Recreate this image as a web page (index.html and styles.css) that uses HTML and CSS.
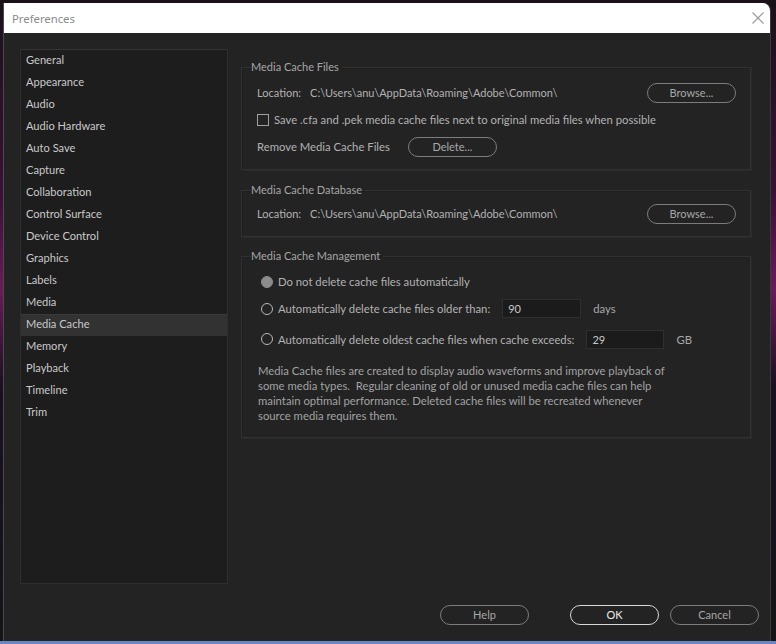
FILE: index.html
```html
<!DOCTYPE html>
<html>
<head>
<meta charset="utf-8">
<title>Preferences</title>
<link rel="stylesheet" href="styles.css">
</head>
<body>
<div class="screen">
  <div class="window">
    <div class="titlebar">
      <span class="title">Preferences</span>
      <svg class="close" width="14" height="14" viewBox="0 0 14 14"><path d="M1.5 1.5 L12.5 12.5 M12.5 1.5 L1.5 12.5" stroke="#9a9a9a" stroke-width="1.1" fill="none"/></svg>
    </div>
    <div class="body">
      <div class="main">
        <ul class="sidebar">
          <li>General</li>
          <li>Appearance</li>
          <li>Audio</li>
          <li>Audio Hardware</li>
          <li>Auto Save</li>
          <li>Capture</li>
          <li>Collaboration</li>
          <li>Control Surface</li>
          <li>Device Control</li>
          <li>Graphics</li>
          <li>Labels</li>
          <li>Media</li>
          <li class="selected">Media Cache</li>
          <li>Memory</li>
          <li>Playback</li>
          <li>Timeline</li>
          <li>Trim</li>
        </ul>
        <div class="content">
          <fieldset class="group g1">
            <legend>Media Cache Files</legend>
            <div class="row loc">
              <span class="label">Location:</span>
              <span class="path">C:\Users\anu\AppData\Roaming\Adobe\Common\</span>
              <span class="spacer"></span>
              <button class="btn">Browse...</button>
            </div>
            <div class="row">
              <span class="checkbox"></span>
              <span class="label">Save .cfa and .pek media cache files next to original media files when possible</span>
            </div>
            <div class="row">
              <span class="label">Remove Media Cache Files</span>
              <button class="btn delete">Delete...</button>
            </div>
          </fieldset>
          <fieldset class="group g2">
            <legend>Media Cache Database</legend>
            <div class="row loc">
              <span class="label">Location:</span>
              <span class="path">C:\Users\anu\AppData\Roaming\Adobe\Common\</span>
              <span class="spacer"></span>
              <button class="btn">Browse...</button>
            </div>
          </fieldset>
          <fieldset class="group g3">
            <legend>Media Cache Management</legend>
            <div class="row r1">
              <span class="radio checked"></span>
              <span class="label">Do not delete cache files automatically</span>
            </div>
            <div class="row r2">
              <span class="radio"></span>
              <span class="label">Automatically delete cache files older than:</span>
              <span class="input i1">90</span>
              <span class="unit">days</span>
            </div>
            <div class="row r3">
              <span class="radio"></span>
              <span class="label">Automatically delete oldest cache files when cache exceeds:</span>
              <span class="input i2">29</span>
              <span class="unit">GB</span>
            </div>
            <p class="note">Media Cache files are created to display audio waveforms and improve playback of some media types.&nbsp; Regular cleaning of old or unused media cache files can help maintain optimal performance. Deleted cache files will be recreated whenever source media requires them.</p>
          </fieldset>
        </div>
      </div>
      <div class="footer">
        <button class="btn fbtn">Help</button>
        <button class="btn fbtn ok">OK</button>
        <button class="btn fbtn">Cancel</button>
      </div>
    </div>
  </div>
  <div class="taskbar"></div>
</div>
</body>
</html>
```
FILE: styles.css
```css
* { box-sizing: border-box; }
html, body { margin: 0; padding: 0; }
body {
  width: 776px;
  height: 644px;
  overflow: hidden;
  background: linear-gradient(180deg, #1a1218 0%, #3a1036 30%, #6a1a5a 45%, #1a1020 60%, #141418 100%);
  font-family: Lato, "Open Sans", sans-serif;
}
.screen {
  width: 776px;
  height: 644px;
  display: flex;
  flex-direction: column;
  padding-top: 3px;
}
.window {
  margin-left: 3px;
  width: 768px;
  height: 638px;
  display: flex;
  flex-direction: column;
  border-left: 1px solid #4a4a4a;
  border-right: 1px solid #3a3a3a;
  border-top-right-radius: 8px;
  overflow: hidden;
  background: #232323;
}
.titlebar {
  height: 30px;
  background: #ffffff;
  display: flex;
  align-items: center;
  padding: 0 5px 0 8px;
  flex-shrink: 0;
}
.title {
  font-family: "Noto Sans", "Open Sans", sans-serif;
  font-size: 11.3px;
  color: #8a8a8a;
  flex: 1;
}
.close { display: block; }
.body {
  flex: 1;
  display: flex;
  flex-direction: column;
  background: #232323;
}
.main {
  display: flex;
  padding: 16px 0 0 16px;
}
.sidebar {
  list-style: none;
  margin: 0;
  padding: 0;
  width: 208px;
  height: 535px;
  background: #1d1d1d;
  border: 1px solid #2e2e2e;
  border-top-color: #353535;
  flex-shrink: 0;
}
.sidebar li {
  height: 22px;
  line-height: 20px;
  padding-left: 5px;
  font-size: 11.1px;
  color: #c9c9c9;
}
.sidebar li.selected {
  background: #323232;
  border-top: 1px solid #3a3a3a;
  line-height: 18px;
}
.content {
  margin-left: 13px;
  width: 510px;
  padding-top: 11px;
  display: flex;
  flex-direction: column;
}
.group {
  margin: 0;
  border: 1px solid #313131;
  box-shadow: 1px 1px 0 #2a2a2a, inset 1px 1px 0 #1f1f1f;
  padding: 5px 14px 9px 15px;
  min-width: 0;
}
.group legend {
  font-size: 11px;
  line-height: 14px;
  color: #a6a6a6;
  padding: 0 3px 0 0;
  margin-left: -6px;
}
.g2 { margin-top: 13px; padding-top: 3px; padding-bottom: 9px; }
.g3 { margin-top: 12px; padding-bottom: 14px; }
.row {
  height: 27px;
  display: flex;
  align-items: center;
  font-size: 11.3px;
  color: #b2b2b2;
}
.row.loc { font-size: 11px; }
.label { white-space: nowrap; }
.path { margin-left: 9px; white-space: nowrap; }
.spacer { flex: 1; }
.btn {
  font-family: Lato, "Open Sans", sans-serif;
  font-size: 11px;
  color: #a8a8a8;
  background: transparent;
  border: 1.5px solid #7c7c7c;
  border-radius: 10px;
  width: 89px;
  height: 20px;
  padding: 0;
  line-height: 16px;
}
.delete { margin-left: 18px; }
.checkbox {
  width: 12px;
  height: 12px;
  border: 1.5px solid #a0a0a0;
  margin-right: 5px;
  flex-shrink: 0;
}
.radio {
  width: 12px;
  height: 12px;
  border-radius: 50%;
  border: 1.5px solid #b8b8b8;
  margin: 0 5px 0 4px;
  flex-shrink: 0;
}
.radio.checked {
  background: #8c8c8c;
  border-color: #8c8c8c;
}
.r3 { height: 34px; }
.input {
  height: 19px;
  width: 79px;
  background: #1b1b1b;
  border: 1px solid #2f2f2f;
  color: #c8c8c8;
  font-size: 11px;
  line-height: 17px;
  padding-left: 5px;
  margin-left: 12px;
}
.i2 { margin-left: 12px; width: 78px; }
.unit { margin-left: 12px; color: #a8a8a8; }
.note {
  margin: 7px 0 0 1px;
  width: 416px;
  font-size: 11.3px;
  line-height: 15px;
  color: #a2a2a2;
}
.footer {
  display: flex;
  justify-content: flex-end;
  padding: 21px 11px 0 0;
}
.fbtn { height: 20px; }
.fbtn.ok {
  margin-left: 41px;
  border-color: #d8d8d8;
  color: #ececec;
}
.fbtn.ok + .fbtn { margin-left: 11px; }
.taskbar {
  height: 3px;
  background: #6a88bf;
  flex-shrink: 0;
}
```
